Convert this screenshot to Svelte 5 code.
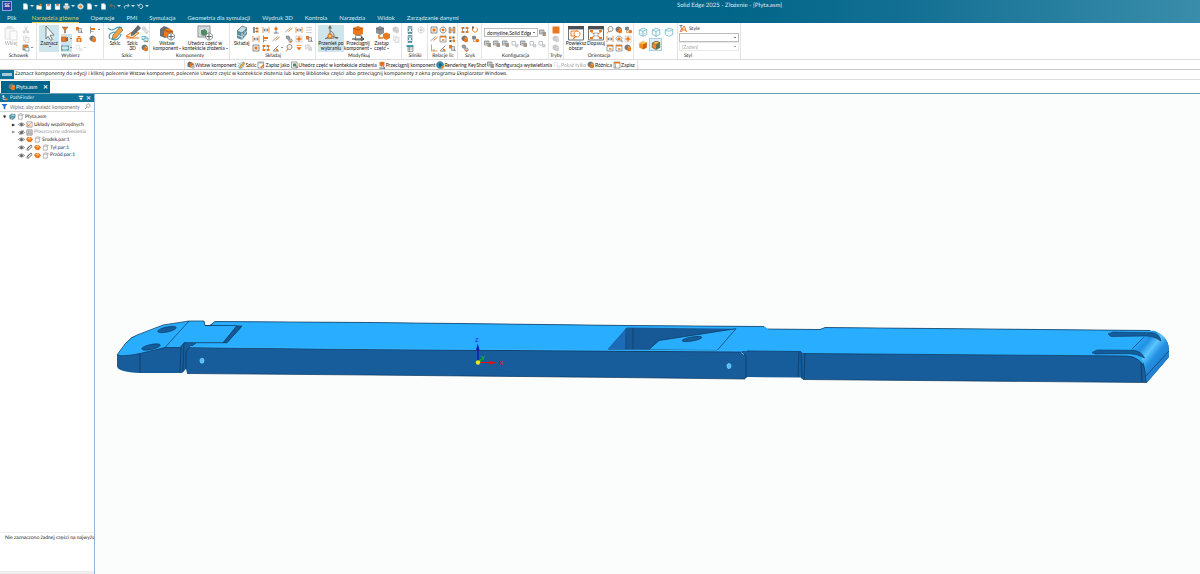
<script lang="ts">
	type Shape = [d: string, fill: string, stroke?: string, width?: number];
	type Small = { icon: string; off?: boolean; menu?: boolean; on?: boolean } | null;
	type Big = { icon: string; label: string; width: number; off?: boolean; on?: boolean; menu?: boolean };
	type Group = { title: string; width: number; big: Big[]; cols: Small[][] };

	const O = '#e8791e';
	const G = '#5d6468';
	const L = '#aab2b6';
	const T = '#3f9fb8';
	const N = 'none';

	// every icon is drawn on a 16 unit grid
	const icons: Record<string, Shape[]> = {
		paste: [['M2 3h9v11H2z', '#eeeeee', '#b5b5b5'], ['M4 1h5v3H4z', '#b5b5b5'], ['M7 6h7v9H7z', '#fafafa', '#b5b5b5']],
		cut: [['M5 1l5 9M11 1L6 10', N, G, 1.5], ['M3 10h3v4H3zM10 10h3v4h-3z', N, G, 1.4]],
		copy: [['M3 2h7v9H3z', '#ffffff', G], ['M6 5h8v10H6z', '#e5e5e5', G]],
		pastespec: [['M2 2h10v10H2z', '#f7b15e', G, 1.4], ['M6 7h8v7H6z', '#ffffff', T, 1.4], ['M3 2h7v5H3z', O]],
		cursor: [['M5 1l8 9-4 .4 2.500 4-2 1-2.500-4-2 2.600z', '#f5f8f9', '#6a7276', .9]],
		filter: [['M2 2h12L9 8v6H7V8z', O, G, 1]],
		blockOrange: [['M1 4h9v9H1z', O, G, 1], ['M10 6l4-2v8l-4 1z', '#b0561a'], ['M1 4l3-2h10l-4 2z', '#ffb65c']],
		frame: [['M1 4h14v8H1z', N, T, 1.5], ['M1 3h2v2H1zM13 3h2v2h-2zM1 11h2v2H1zM13 11h2v2h-2z', G]],
		frameGray: [['M2 3h7v7H2z', N, L, 1.5], ['M9 9h5v5H9z', '#d8d8d8', L]],
		pair: [['M2 2h6v7H2z', O], ['M7 5h6v8H7z', '#dddddd', G], ['M12 10l3 4', N, G, 1.5]],
		figure: [['M5 2h6v3H5zM3 6h10v8H3z', O], ['M6 8h4v5H6z', '#ffd19c']],
		flag: [['M3 1v14', N, G, 1.4], ['M4 4h8v4H4z', O], ['M4 10h5v2H4z', L]],
		sphere: [['M7 1a6 6 0 1 0 .1 0z', '#737a7e'], ['M8 5l6 0v8l-5 2-4-4z', O], ['M8 5l3 2 3-2', N, '#ffd19c', 1]],
		sketch: [['M1 3C6 9 10-1 15 3', N, T, 1.1], ['M3 14C0 8 6 7 10 7M4 14c5 2 9 0 10-5', N, T, 1.2], ['M13 2l3 3-7 8-4 1 1-4z', '#f0a53a', G, .7]],
		sketch3d: [['M1 11l6-4 7 1-7 5z', '#f6dfb8', O, 1], ['M13 0l3 3-7 7-3 1v-3z', '#666d70'], ['M1 13h13', N, O, 1]],
		link: [['M3 2h5l2 4-4 3-4-3z', '#9aa2a6', G, 1], ['M8 8h5l2 4-4 3-4-3z', '#c7ccce', G, 1], ['M9 12h4v3H9z', O]],
		copyTeal: [['M2 3h8v6H2z', N, T, 1.5], ['M6 6h8v7H6z', '#d9edf3', T, 1.5], ['M9 11l4 3', N, O, 2]],
		insert: [['M1 4l4-3 5 2v8l-4 2-5-2z', '#667075'], ['M5 5l5-2 4 3v6l-4 2-5-3z', O], ['M5 5l5 2 4-1', N, '#9b4b15', .8], ['M12 8a3.500 3.500 0 1 0 .1 0z', '#ffffff', G, .8], ['M12 9v5M9.500 11.500h5', N, G, 1]],
		create: [['M1 1h12v11H1z', '#e4eaec', '#697276', .8], ['M3 3h8v7H3z', '#ffffff', L, .8], ['M4 5l4-1 2 2v4l-4 1-2-2z', '#4f8b63'], ['M12 8a3.500 3.500 0 1 0 .1 0z', '#ffffff', G, .8], ['M12 9v5M9.500 11.500h5', N, G, 1]],
		assemble: [['M3 6l5-5 5 2v6l-5 6-5-2z', '#5f8d9d'], ['M3 6l5-5 5 2-5 5z', '#c7dce3', '#5b7078', .7], ['M8 8v7M3 10l5 2 5-6', N, '#dbeaf0', .8], ['M10.500 5v7', N, '#8cbacb', .7]],
		mate: [['M2 2h4v12H2z', '#8d9498'], ['M8 3h5v4H8zM8 9h5v4H8z', O], ['M6 5h5M6 11h5', N, G, 1]],
		gap: [['M2 2v12M14 2v12', N, O, 1.600], ['M4 8h8M6 5L4 8l2 3M10 5l2 3-2 3', N, G, 1.500]],
		axis: [['M8 1v14M3 14h10', N, G, 1.500], ['M5 3h6v5H5z', O]],
		angle: [['M2 14h12M3 13L13 3', N, G, 1.500], ['M7 9l5 1v4H9z', O]],
		move: [['M2 2h12v12H2z', '#ffffff', L, 1], ['M8 2v12M2 8h12', N, O, 1.500], ['M5 5h6v6H5z', O]],
		rect: [['M2 2h12v12H2z', '#ffffff', G, 1.500], ['M5 5h6v6H5z', O]],
		arrowDown: [['M3 3h10M8 12L4 7h8z', O, O, 1.500]],
		lines: [['M2 3h12M2 8h12M2 13h12', N, G, 1.500], ['M10 1v4', N, O, 2]],
		triad: [['M7 2v9l8 2M7 11l-5 3', N, '#73685e', 1], ['M7 0l2 3.500H5zM16 13l-3.500 1V11.500z', '#73685e'], ['M7 6a5 5 0 0 1 4 6M3 13a7 3 0 0 0 8 0', N, '#73685e', .8], ['M7 9a2 2 0 1 0 .1 0z', '#ffd0a0', O, 1.300]],
		drag: [['M3 3l5-2 5 2v6l-5 2-5-2z', O], ['M3 3l5 2 5-2', N, '#a34e11', .8], ['M6 10l6 1-1 4H5z', '#ffffff', G, .8], ['M2 14h12l-3-2M14 14l-3 2', N, '#343a3d', 1]],
		swap: [['M2 3l4-2 4 2v5l-4 2-4-2z', '#8a9093'], ['M2 3l4 2 4-2', N, '#5a6063', .8], ['M5 10v3h4', N, O, 1.500], ['M9 9l3-1.500L16 9v4l-4 2-3-2z', O]],
		motor: [['M4 1h8v14H4z', '#4d9bac', G, 1], ['M4 4h8M4 11h8', N, '#ffffff', 1.500], ['M6 6h4v4H6z', '#e8f6f9']],
		motorTable: [['M1 2h14v4H1z', T], ['M4 6h10v9H4z', '#ffffff', G, 1.200], ['M7 6v9M4 10h10', N, G, 1]],
		ring: [['M8 2a6 6 0 1 0 .1 0z', '#ffffff', G, 1.500], ['M8 5a3 3 0 1 0 .1 0z', O]],
		faces: [['M2 3h4v11H2zM10 2h4v12h-4z', '#f3ad6a', G, 1], ['M6 8h4', N, O, 2]],
		slant: [['M1 12L11 3', N, G, 1.200], ['M7 11l8-7', N, O, 2]],
		dots: [['M2 3h5v5H2zM9 9h5v5H9z', O], ['M9 3h4v4H9zM3 10h4v4H3z', G]],
		corner: [['M3 1v13h12', N, O, 1.500], ['M5 12h5', N, G, 1]],
		pattern: [['M3 4h10v8H3z', N, G, 1.200], ['M1 2h5v4H1zM10 2h5v4h-5zM1 10h5v4H1zM10 10h5v4h-5z', O]],
		curve: [['M4 2C0 9 7 16 12 10c2-3 1-5-1-6', N, O, 2], ['M2 1h4v4H2z', G]],
		config: [['M1 2h9v8H1z', '#e5e8e9', G, 1.200], ['M3 4h5M3 7h5', N, G, 1], ['M7 6h7v8H7z', '#999fa1'], ['M9 8l4 5', N, O, 1.500]],
		squareOrange: [['M1 1h14v14H1z', O]],
		zoomArea: [['M0 1h16v3H0z', '#4b4f51'], ['M.5 4h15v11H.5z', '#ffffff', '#4b4f51', .8], ['M3 6h7v5H3z', '#fff5ea', O, .9], ['M9 6a3 3 0 1 0 .1 0z', '#ffffff', O, .9], ['M8 11l-3 3', N, O, 1.100]],
		fit: [['M0 1h16v3H0z', '#4b4f51'], ['M.5 4h15v11H.5z', '#ffffff', '#4b4f51', .8], ['M2 6l4 3M14 6l-4 3M2 14l4-3M14 14l-4-3', N, O, 1], ['M2 5h3v2H2zM11 5h3v2h-3zM2 12h3v2H2zM11 12h3v2h-3z', O], ['M6 8h4v3H6z', '#ffffff', G, .5]],
		zoom: [['M9 1a5 5 0 1 0 .1 0z', '#fff3e8', G, 1.400], ['M6 10l-4 5', N, O, 2]],
		rotate: [['M8 2a6 5 0 1 0 .1 0z', N, G, 1.200], ['M5 5h6v5H5z', O], ['M11 11h4v4z', G]],
		view: [['M2 2h12v12H2z', '#ffffff', G, 1.200], ['M2 2h12v3H2z', O], ['M6 8h5v4H6z', '#efa45f']],
		cubeWire: [['M2 5l6-3 6 2v8l-6 3-6-3zM2 5l6 2 6-3M8 7v8', '#f7fcfd', '#4aa5bd', 1], ['M8 2v7l-6 3M8 9l6 3', N, '#9accd9', .7]],
		cubeEdge: [['M2 5l6-3 6 2v8l-6 3-6-3zM2 5l6 2 6-3M8 7v8', '#f7fcfd', '#4aa5bd', 1]],
		cubeOutline: [['M2 5l6-3 6 2v8l-6 3-6-3zM2 5l6 2 6-3', '#f7fcfd', '#4aa5bd', 1]],
		cube: [['M2 5l6-3 6 2v8l-6 3-6-3z', '#ef8920'], ['M2 5l6-3 6 2-6 3z', '#ffc255'], ['M8 7l6-3v8l-6 3z', '#d0640d']],
		cubeDark: [['M2 5l6-3 6 2v8l-6 3-6-3z', '#ed8b20', '#54482e', 1], ['M2 5l6-3 6 2-6 3z', '#ffc255', '#54482e', .7], ['M8 7l6-3v8l-6 3z', '#657044']],
		style: [['M1 1h6M4 1v5', N, G, 1.600], ['M5 14L9 3h2l4 11M7 10h7', N, O, 2], ['M2 14l4-8', N, '#c9432e', 1.600]],
		globe: [['M8 1a7 7 0 1 0 .1 0z', '#3b8fb0', '#2a5f83', 1], ['M6 5h5v6H6z', '#205677'], ['M10 10h5v5h-5z', O]],
		note: [['M2 2h11v12H2z', '#ffffff', G, 1.200], ['M2 2h11v3H2z', L], ['M13 6l2 2-6 6-2 0 0-2z', O]],
		panel: [['M2 2h12v12H2z', '#ffffff', G, 1.200], ['M2 2h12v3H2z', O], ['M5 5v9', N, G, 1]],
		greenBox: [['M1 2h11v12H1z', '#ffffff', G, 1.200], ['M4 5h6v6H4z', '#53855e'], ['M12 9v6M9 12h6', N, G, 1]],
		plane: [['M2 2h12v12H2z', '#ffffff', '#666666', 1.500], ['M5 5h6v4H5zM2 11h12', N, '#666666', 1.300]],
		axes: [['M2 2h12v12H2z', '#ffffff', '#666666', 1.200], ['M3 13l10-10M4 5v6h7', N, O, 1.600]],
		eye: [['M1 8Q8 1 15 8Q8 15 1 8z', '#ffffff', '#555555', 1.500], ['M8 5a3 3 0 1 0 .1 0z', '#555555']],
		eyeOff: [['M1 8Q8 1 15 8Q8 15 1 8z', '#ffffff', '#555555', 1.500], ['M8 5a3 3 0 1 0 .1 0z', '#555555'], ['M3 14L13 2', N, '#555555', 1.500]],
		clip: [['M3 10l7-7q4-1 3 3l-6 7q-4 3-5-1l6-7', N, '#4f585c', 2.200]],
		part: [['M0 7l4-5 8 1 4 5-5 6-7-1z', O], ['M3 5l5-2 5 3-5 3z', '#ffb260']],
		box: [['M3 5h9v9H3z', '#ffffff', '#757575', 1.200], ['M3 5l3-3h4M11 1l2 4M13 5l2-3', N, '#757575', 1.200]],
		asm: [['M1 6l5-4 8 1v7l-5 5-7-2z', '#5798ad', '#3b6b7b', 1], ['M5 5l4-2 5 2-5 2z', '#b9dfe7'], ['M7 8v6', N, '#ffffff', 1]],
		search: [['M10 2a4 4 0 1 0 .1 0z', N, '#555555', 1.200], ['M7 9l-5 5', N, '#555555', 1.300]],
		funnel: [['M1 2h14L10 8v7l-4-2V8z', '#2374d3']],
		pin: [['M2 2h12v3H2zM3 7h10l-5 7z', '#ffffff']],
		tree: [['M3 2v10h8M3 7h6', N, '#ffffff', 1.500], ['M1 1h5v4H1z', '#d4edf5'], ['M9 9h6v5H9z', O]],
		docWhite: [['M3 1h7l3 3v11H3z', '#ffffff'], ['M10 1v3h3', N, '#88aebf', 1]],
		folder: [['M1 5h5l2 2h5v8H1z', '#fff2df'], ['M8 2h5v5H8z', O]],
		disk: [['M2 2h12v13H2z', '#dde7eb'], ['M5 2h6v4H5z', '#b87755'], ['M4 9h8v6H4z', '#ffffff']],
		printer: [['M4 1h8v5H4z', '#ffffff'], ['M1 6h14v6H1z', '#c9d8df'], ['M4 10h8v5H4z', '#e9bd8e']],
		gearWhite: [['M8 2a6 6 0 1 0 .1 0z', '#c8dbe3', '#ffffff', 1.500], ['M8 5a3 3 0 1 0 .1 0z', O]],
		undo: [['M5 2L2 6l4 3M2 6h7c5 0 5 5 2 7', N, '#93713f', 2]],
		redo: [['M11 2l3 4-4 3M14 6H7C2 6 2 11 5 13', N, '#c8dbe3', 2]],
		repeat: [['M3 6c3-6 11-3 10 3-1 4-6 5-8 1M1 3l2 4 4-1', N, '#ffffff', 1.700]]
	};

	const quick = [
		['docWhite', true], ['folder', false], ['disk', false], ['disk', false], ['printer', true], ['gearWhite', false],
		['docWhite', true], ['docWhite', false], ['undo', true], ['redo', true], ['repeat', true]
	] as [string, boolean][];

	const tabs = [
		'Plik', 'Narzędzia główne', 'Operacje', 'PMI', 'Symulacja', 'Geometria dla symulacji',
		'Wydruk 3D', 'Kontrola', 'Narzędzia', 'Widok', 'Zarządzanie danymi'
	];
	let activeTab = $state('Narzędzia główne');

	const s = (icon: string, extra = {}): Small => ({ icon, ...extra });
	const off = { off: true };

	const groups: Group[] = [
		{ title: 'Schowek', width: 37, big: [{ icon: 'paste', label: 'Wklej', width: 18, off: true }],
			cols: [[s('cut', off), s('copy', off), s('pastespec', { menu: true })]] },
		{ title: 'Wybierz', width: 67, big: [{ icon: 'cursor', label: 'Zaznacz', width: 20, on: true, menu: true }],
			cols: [[s('filter'), s('blockOrange', { on: true, menu: true }), s('frame', { on: true, menu: true })],
				[s('pair'), s('figure'), s('frameGray', { off: true, menu: true })], [s('flag', { menu: true }), s('sphere')]] },
		{ title: 'Szkic', width: 46, big: [{ icon: 'sketch', label: 'Szkic', width: 18 }, { icon: 'sketch3d', label: 'Szkic\n3D', width: 17 }],
			cols: [[s('link', off), s('copyTeal'), s('sphere')]] },
		{ title: 'Komponenty', width: 80, big: [
			{ icon: 'insert', label: 'Wstaw\nkomponent', width: 30, menu: true },
			{ icon: 'create', label: 'Utwórz część w\nkontekście złożenia', width: 46, menu: true }], cols: [] },
		{ title: 'Składaj', width: 86, big: [{ icon: 'assemble', label: 'Składaj', width: 19 }],
			cols: [[s('mate'), s('gap'), s('rect')], [s('gap'), s('flag'), s('pattern')], [s('axis'), s('slant'), s('angle', { menu: true })],
				[s('slant'), s('link'), s('zoom')], [s('gap'), s('move'), s('arrowDown')], [s('lines', off), s('pair'), s('config', off)]] },
		{ title: 'Modyfikuj', width: 86, big: [
			{ icon: 'triad', label: 'Przenieś po\nwybraniu', width: 26, on: true },
			{ icon: 'drag', label: 'Przeciągnij\nkomponent', width: 28, menu: true },
			{ icon: 'swap', label: 'Zastąp\nczęść', width: 19, menu: true }],
			cols: [[s('sphere', off), s('copy', off)]] },
		{ title: 'Silniki', width: 26, big: [], cols: [[s('motor'), s('motor'), s('motorTable')], [s('ring', off)]] },
		{ title: 'Relacje lic', width: 30, big: [],
			cols: [[s('rect'), s('slant'), s('corner')], [s('ring'), s('view'), s('angle')], [s('faces'), s('dots'), s('pair')]] },
		{ title: 'Szyk', width: 24, big: [], cols: [[s('pattern'), s('sphere'), s('link')], [s('curve'), s('swap')]] }
	];

	const configRow = ['config', 'config', 'config', 'frameGray', 'config', 'frameGray', 'frameGray'];
	const modes: Small[][] = [[s('squareOrange'), s('sphere', off), s('sphere', off)]];
	const orient: Group = { title: 'Orientacja', width: 70, big: [
		{ icon: 'zoomArea', label: 'Powiększ\nobszar', width: 20 }, { icon: 'fit', label: 'Dopasuj', width: 20 }],
		cols: [[s('zoom'), s('gap'), s('view')], [s('sphere'), s('rotate'), s('view')], [s('swap'), s('move'), s('sphere')]] };

	const commands: [string, string, boolean?][] = [
		['insert', 'Wstaw komponent'], ['sketch', 'Szkic'], ['note', 'Zapisz jako'], ['greenBox', 'Utwórz część w kontekście złożenia'],
		['drag', 'Przeciągnij komponent'], ['globe', 'Rendering KeyShot'], ['config', 'Konfiguracja wyświetlania'],
		['frameGray', 'Pokaż tylko', true], ['sphere', 'Różnica'], ['panel', 'Zapisz']
	];

	const tree = [
		{ level: 0, arrow: '▼', icons: ['asm', 'box'], label: 'Płyta.asm' },
		{ level: 1, arrow: '▶', icons: ['eye', 'axes'], label: 'Układy współrzędnych' },
		{ level: 1, arrow: '▶', icons: ['eyeOff', 'plane'], label: 'Płaszczyzny odniesienia', dim: true },
		{ level: 2, arrow: '', icons: ['eye', 'part', 'box'], label: 'Środek.par:1' },
		{ level: 2, arrow: '', icons: ['eye', 'clip', 'part', 'box'], label: 'Tył.par:1' },
		{ level: 2, arrow: '', icons: ['eye', 'clip', 'part', 'box'], label: 'Przód.par:1' }
	];
</script>

{#snippet icon(name: string)}
	<svg class="icon" viewBox="0 0 16 16" aria-hidden="true">
		{#each icons[name] as [d, fill, stroke, width]}
			<path {d} {fill} stroke={stroke ?? 'none'} stroke-width={width ?? 1} />
		{/each}
	</svg>
{/snippet}

{#snippet smallCols(cols: Small[][])}
	<div class="cols">
		{#each cols as col}
			<div class="col">
				{#each col as item}
					{#if item}
						<button class="small" class:off={item.off} class:on={item.on} aria-label={item.icon}>
							{@render icon(item.icon)}
							{#if item.menu}<i class="caret"></i>{/if}
						</button>
					{/if}
				{/each}
			</div>
		{/each}
	</div>
{/snippet}

{#snippet ribbonGroup(group: Group)}
	<section class="group" style:width="{group.width}px">
		<div class="tools">
			{#each group.big as b}
				<button class="big" class:off={b.off} class:on={b.on} style:width="{b.width}px">
					{@render icon(b.icon)}
					<span class="label">{b.label}{#if b.menu && b.label.includes('\n')}<i class="caret"></i>{/if}</span>
					{#if b.menu && !b.label.includes('\n')}<i class="caret"></i>{/if}
				</button>
			{/each}
			{#if group.cols.length}{@render smallCols(group.cols)}{/if}
		</div>
		<h2>{group.title}</h2>
	</section>
{/snippet}

<div class="app">
	<header>
		<div class="titlebar">
			<span class="logo">SE</span>
			<div class="quick">
				{#each quick as [name, menu]}
					<button aria-label={name}>{@render icon(name)}{#if menu}<i class="caret"></i>{/if}</button>
				{/each}
			</div>
			<h1>Solid Edge 2025 - Złożenie - [Płyta.asm]</h1>
		</div>
		<nav class="tabs">
			{#each tabs as tab}
				<button class:active={tab === activeTab} onclick={() => activeTab = tab}>{tab}</button>
			{/each}
		</nav>
	</header>

	<div class="ribbon">
		{#each groups as group}
			{@render ribbonGroup(group)}
		{/each}
		<section class="group config">
			<div class="config-tools">
				<div class="config-line">
					<select aria-label="Konfiguracja"><option>domyślne,Solid Edge</option></select>
					<button class="small" aria-label="config">{@render icon('config')}</button>
				</div>
				<div class="config-line icons">
					{#each configRow as name}
						<button class="small" aria-label={name}>{@render icon(name)}</button>
					{/each}
				</div>
			</div>
			<h2>Konfiguracja</h2>
		</section>
		<section class="group modes">
			<div class="tools">{@render smallCols(modes)}</div>
			<h2>Tryby</h2>
		</section>
		{@render ribbonGroup(orient)}
		<section class="group cubes">
			{#each ['cubeWire', 'cubeEdge', 'cubeOutline', 'cube', 'cubeDark'] as name}
				<button class="cube" class:picked={name === 'cubeDark'} aria-label={name}>{@render icon(name)}</button>
			{/each}
		</section>
		<section class="group style-group">
			<label for="style">{@render icon('style')} Style</label>
			<select id="style"><option></option></select>
			<select class="muted" aria-label="Styl" disabled><option>(Żaden)</option></select>
			<h2>Styl</h2>
		</section>
	</div>

	<div class="commands">
		<div class="command-list">
			{#each commands as [name, label, disabled]}
				<button class:off={disabled}>{@render icon(name)}{label}</button>
			{/each}
		</div>
	</div>

	<div class="prompt">
		<span class="badge"><i></i></span>
		<p>Zaznacz komponenty do edycji i kliknij polecenie Wstaw komponent, polecenie Utwórz część w kontekście złożenia lub kartę Biblioteka części albo przeciągnij komponenty z okna programu Eksplorator Windows.</p>
	</div>

	<div class="documents">
		<button class="document">{@render icon('sphere')}<span>Płyta.asm</span><b>✕</b></button>
	</div>

	<main>
		<aside>
			<div class="panel-head">
				{@render icon('tree')}
				<span>PathFinder</span>
				<button aria-label="Przypnij">{@render icon('pin')}</button>
				<button class="close" aria-label="Zamknij">✕</button>
			</div>
			<div class="search">
				{@render icon('funnel')}
				<input type="text" placeholder="Wpisz, aby znaleźć komponenty" aria-label="Szukaj" />
				{@render icon('search')}
			</div>
			<ul>
				{#each tree as node}
					<li class="level-{node.level}" class:dim={node.dim}>
						<span class="arrow">{node.arrow}</span>
						{#each node.icons as name}{@render icon(name)}{/each}
						<span class="node-name">{node.label}</span>
					</li>
				{/each}
			</ul>
			<p class="status">Nie zaznaczono żadnej części na najwyżs</p>
			<div class="panel-foot"></div>
		</aside>

		<div class="viewport">
			<svg viewBox="95 94 1105 480" preserveAspectRatio="xMidYMin meet" role="img" aria-label="Płyta.asm">
				<defs>
					<linearGradient id="round" x1="1134" y1="343" x2="1163" y2="367" gradientUnits="userSpaceOnUse">
						<stop offset="0" stop-color="#29adff" />
						<stop offset=".25" stop-color="#2391e2" />
						<stop offset=".45" stop-color="#5cc6ff" />
						<stop offset=".65" stop-color="#2491e2" />
						<stop offset="1" stop-color="#1f78c8" />
					</linearGradient>
				</defs>
				<!-- silhouette in side colour -->
				<path class="side" d="M117 355L132 337 189 321H204L205 325H210L215 321.500 370 322.500 630 325.500 764 326.500 768 329 820 329.500 825 327.500 1150 330.500Q1169 335 1169 350V357L1147 382.500 803 379.500 801 377.500 747 377 745 379 620 377.500 370 375 187 373.500 186 369 182 373H140Q117 372 117 366z" />
				<!-- top faces -->
				<path class="top" d="M117 355L125 344Q131 337 137 335L163 325 189 321H204L205 325.500H237L223 342.700H184L180 347.500H165L140 353.500Q123 357 117 355z" />
				<path class="top" d="M215 321.500L370 322.500 630 325.500 764 326.500 768 329 820 329.500 825 327.500 1150 330.500Q1160 331 1165 339L1142 364Q1137 356 1127 356L803 353.500 801 351.500 747 351 370 349.500 190 347.500 196 342.700H227L242 326.300 211 325z" />
				<path class="inside" d="M237 326L242 326.300 227 342.700H223zM627 327.500L736 328.700 659 340.500 649 349.500 608 349z" />
				<path class="wall" d="M627 327.500L625.500 349H608z" />
				<path class="hole" d="M626 328V349M633 328V349.500" />
				<path class="edge" d="M117 355L125 344Q131 337 137 335L163 325 189 321H204M659 340.500L736 328.700 717 350.500M649 349.500L659 340.500M608 349.500L717 350.500M189 321L165 347.500M140 353.500V372.500M181 347.500L180 372.500M184 343L183 372M186 369V353Q187 348 190 347.500L196 343M205 325.500H237L223 342.700H184L180 347.500H165L140 353.500Q123 357 117 355M237 326H242L227 342.700H223" />
				<path class="edge" d="M190 347.500L370 349.500 630 351.300 740 352Q746 353 746 358V378M747 351L801 351.500M799 352L798 377M801 352L802 379M805 354L804 379M803 353.500L1127 356Q1141 357 1145 370L1146.500 382M204 321L205 325.500H210L215 321.500 370 322.500 630 325.500 764 326.500M768 329L820 329.500 825 327.500 1150 330.500M187 373.500L370 375 620 377.500 745 379M803 379.500L1147 382.500" />
				<path class="top-light" d="M190 346.700L370 348.600 630 350.300 742 351" />
				<!-- rounded end -->
				<path fill="url(#round)" d="M1144 337L1132 349Q1145 354 1146 378L1147 382.500 1169 357V350Q1168 335 1153 330.500z" />
				<path class="edge" d="M1144 337L1132 349M1146 376L1169 351M1141 362L1142 382" />
				<path class="slot" d="M1108 334L1113 332 1152 332.700Q1160 334 1161 341 1154 336 1147 336L1111 336.500zM1092 352.500L1097 350 1134 350.300Q1142 352 1144.500 358 1137 354 1130 353.700L1095 354z" />
				<ellipse class="slot" cx="167" cy="329.500" rx="9.500" ry="2.500" transform="rotate(-12 167 329.500)" />
				<ellipse class="slot" cx="151" cy="347" rx="9.500" ry="2.500" transform="rotate(-12 151 347)" />
				<ellipse class="slot" cx="692" cy="339" rx="10" ry="2" transform="rotate(-10 692 339)" />
				<ellipse class="pinhole" cx="202" cy="360.700" rx="2" ry="2.500" />
				<ellipse class="pinhole" cx="729" cy="366" rx="2" ry="2.500" />
				<path class="pinhole" d="M741 352.500l3 2" />
				<!-- coordinate triad -->
				<path stroke="#0b1fb4" stroke-width="1.500" d="M478 362V348" />
				<path fill="#0b1fb4" d="M477.700 343.500L479.500 350H476z" />
				<path stroke="#e01010" d="M478 362.500H492" />
				<path fill="#e01010" d="M497 362.700L490 361V364.500z" />
				<path stroke="#12a51c" stroke-width="2" d="M479 362L482 359" />
				<circle cx="478" cy="362.500" r="2.200" fill="#f4e11f" />
				<text x="475" y="342" fill="#2447e0">Z</text>
				<text x="481" y="359.500" fill="#12c51c">Y</text>
				<text x="499" y="365" fill="#d0202a">X</text>
			</svg>
		</div>
	</main>
</div>

<style>
	:global(body) {
		background: #ffffff;
	}

	.app {
		display: flex;
		flex-direction: column;
		min-height: 100vh;
		font: 5px/6px 'Lato', sans-serif;
		text-rendering: geometricPrecision;
		color: #222222;
	}

	.app * {
		box-sizing: border-box;
	}

	button, select, input {
		font: inherit;
		color: inherit;
		padding: 0;
		margin: 0;
		border: 0;
		background: none;
	}

	button {
		display: flex;
		align-items: center;
		white-space: nowrap;
	}

	h1, h2, p, ul {
		margin: 0;
		padding: 0;
		font-size: inherit;
		font-weight: 400;
	}

	.icon {
		width: 8px;
		height: 8px;
		flex: none;
		display: block;
	}

	.caret {
		flex: none;
		display: inline-block;
		border: 1px solid transparent;
		border-top-color: currentColor;
		border-bottom: 0;
		margin-left: 1px;
	}

	.off {
		opacity: 0.4;
		filter: grayscale(1);
	}

	header {
		background: linear-gradient(90deg, #006588 60%, #126f93 75%, #3a8dab);
		color: #d9eaf1;
		font-size: 6px;
		line-height: 8px;
	}

	.titlebar {
		display: flex;
		align-items: center;
		height: 12px;
		padding-left: 2px;
	}

	.logo {
		width: 10px;
		height: 10px;
		border: 1px solid #8fa2df;
		background: #2d3c9c;
		color: #ffffff;
		font-size: 5px;
		font-weight: 700;
		text-align: center;
	}

	.quick {
		display: flex;
		gap: 2px;
		padding-left: 10px;
	}

	.quick .icon {
		width: 7px;
		height: 7px;
	}

	.quick .caret {
		border-width: 2px;
		border-bottom: 0;
		margin-left: 1px;
	}

	h1 {
		flex: 1;
		padding-left: 110px;
		text-align: center;
	}

	.tabs {
		display: flex;
		gap: 12px;
		height: 11px;
		padding: 1px 0 0 7px;
	}

	.tabs button {
		height: 10px;
		border-bottom: 1px solid transparent;
	}

	.tabs button:first-child {
		margin-right: 3px;
	}

	.tabs .active {
		color: #d9c860;
		border-color: #d9c860;
	}

	.ribbon {
		display: flex;
		height: 37px;
		border-bottom: 1px solid #dcdcdc;
	}

	.group {
		display: flex;
		flex-direction: column;
		flex: none;
		padding: 2px 1px 0 2px;
		border-right: 1px solid #e4e4e4;
	}

	h2 {
		padding-top: 1px;
		text-align: center;
		white-space: nowrap;
	}

	.tools {
		display: flex;
		height: 27px;
	}

	.big {
		flex-direction: column;
		flex: none;
		height: 27px;
	}

	.big .icon {
		width: 16px;
		height: 16px;
	}

	.label {
		line-height: 5px;
		text-align: center;
		white-space: pre;
	}

	.label .caret {
		vertical-align: 1px;
	}

	.on {
		background: #cde5eb;
	}

	.cols {
		display: flex;
		flex: 1;
		justify-content: space-around;
	}

	.col {
		display: flex;
		flex-direction: column;
	}

	.small {
		height: 9px;
	}

	.config {
		width: 67px;
	}

	.config-tools {
		height: 27px;
		padding-top: 3px;
	}

	.config-line {
		display: flex;
		align-items: center;
		gap: 1px;
	}

	select {
		appearance: none;
		width: 100%;
		height: 9px;
		padding: 0 6px 0 2px;
		border: 1px solid #bcbcbc;
		background: linear-gradient(#777777, #777777) right 2px center / 2px 1px no-repeat #ffffff;
	}

	.config-line select {
		width: 54px;
	}

	.icons {
		padding-top: 2px;
	}

	.modes {
		width: 15px;
		padding: 2px 0 0;
	}

	.cubes {
		width: 44px;
		display: grid;
		grid-template-columns: repeat(3, 13px);
		grid-auto-rows: 13px;
	}

	.cube {
		justify-content: center;
	}

	.cube .icon {
		width: 10px;
		height: 10px;
	}

	.picked {
		background: #e1f0f6;
		border: 1px solid #a7d0e0;
	}

	.style-group {
		width: 63px;
		padding-left: 1px;
	}

	.style-group label {
		display: flex;
		align-items: center;
		gap: 2px;
		height: 8px;
	}

	.style-group h2 {
		width: 18px;
		padding-top: 2px;
	}

	.muted {
		color: #888888;
		border-color: #e0e0e0;
	}

	.commands {
		height: 10px;
		padding-left: 184px;
		border-bottom: 1px solid #c6c6c6;
	}

	.command-list {
		display: inline-flex;
		gap: 1px;
		height: 9px;
		padding: 0 2px;
		border: 1px solid #e2e2e2;
		border-width: 0 1px;
	}

	.prompt {
		display: flex;
		height: 10px;
		border-bottom: 1px solid #dedede;
		font: 5px/9px 'Noto Sans', sans-serif;
	}

	.badge {
		width: 14px;
		margin-right: 1px;
		padding: 3px 2px;
		background: #0f7198;
	}

	.badge i {
		display: block;
		height: 3px;
		background: #a9c8d5;
	}

	.documents {
		height: 14px;
		padding: 1px 0 0 1px;
		border-bottom: 1px solid #6da3b9;
	}

	.document {
		width: 49px;
		height: 12px;
		padding: 0 2px 0 7px;
		background: #006588;
		color: #ffffff;
	}

	.document b {
		margin-left: auto;
		font-size: 6px;
	}

	main {
		display: flex;
		flex: 1;
	}

	aside {
		display: flex;
		flex-direction: column;
		width: 95px;
		flex: none;
		border-right: 1px solid #94b5d9;
	}

	aside .icon {
		width: 7px;
		height: 7px;
	}

	.panel-head {
		display: flex;
		align-items: center;
		gap: 2px;
		height: 8px;
		padding: 0 3px 0 2px;
		background: #0f7198;
		color: #d9eaf1;
	}

	.panel-head span {
		flex: 1;
	}

	.panel-head .icon {
		width: 6px;
		height: 6px;
	}

	.close {
		font-size: 6px;
		font-weight: 700;
	}

	.search {
		display: flex;
		align-items: center;
		gap: 1px;
		height: 10px;
		padding: 0 3px 0 1px;
		border-bottom: 1px solid #d6d6d6;
	}

	.search input {
		flex: 1;
		min-width: 0;
		padding-left: 1px;
		outline: none;
	}

	ul {
		display: flex;
		flex-direction: column;
		height: 46px;
		margin-top: 1px;
		list-style: none;
	}

	li {
		display: flex;
		align-items: center;
		flex: 1;
		gap: 1px;
		padding-left: 3px;
		white-space: nowrap;
	}

	.level-1, .level-2 {
		padding-left: 12px;
	}

	.arrow {
		width: 5px;
		font: 4px/6px 'DejaVu Sans', sans-serif;
	}

	.dim {
		color: #909090;
	}

	.status {
		margin-top: auto;
		padding: 2px 0 30px 5px;
		border-top: 1px solid #eeeeee;
		white-space: nowrap;
	}

	.panel-foot {
		height: 3px;
		background: #eeeeee;
	}

	.viewport {
		flex: 1;
		min-width: 0;
		background: #fbfdfd;
	}

	.viewport svg {
		display: block;
		width: 100%;
		font: 700 6px 'Liberation Sans', sans-serif;
	}

	.side {
		fill: #175d9b;
	}

	.top {
		fill: #29adff;
	}

	.inside {
		fill: #175996;
	}

	.wall {
		fill: #1b6bb8;
	}

	.edge {
		fill: none;
		stroke: #0d365c;
		stroke-width: 0.7;
	}

	.hole {
		fill: none;
		stroke: #0d365c;
		stroke-width: 0.6;
	}

	.top-light {
		fill: none;
		stroke: #36b4ff;
	}

	.slot {
		fill: #145d9d;
		stroke: #0d365c;
		stroke-width: 0.6;
	}

	.pinhole {
		fill: #52bdf0;
		stroke: #7fd3ff;
		stroke-width: 0.8;
	}
</style>
